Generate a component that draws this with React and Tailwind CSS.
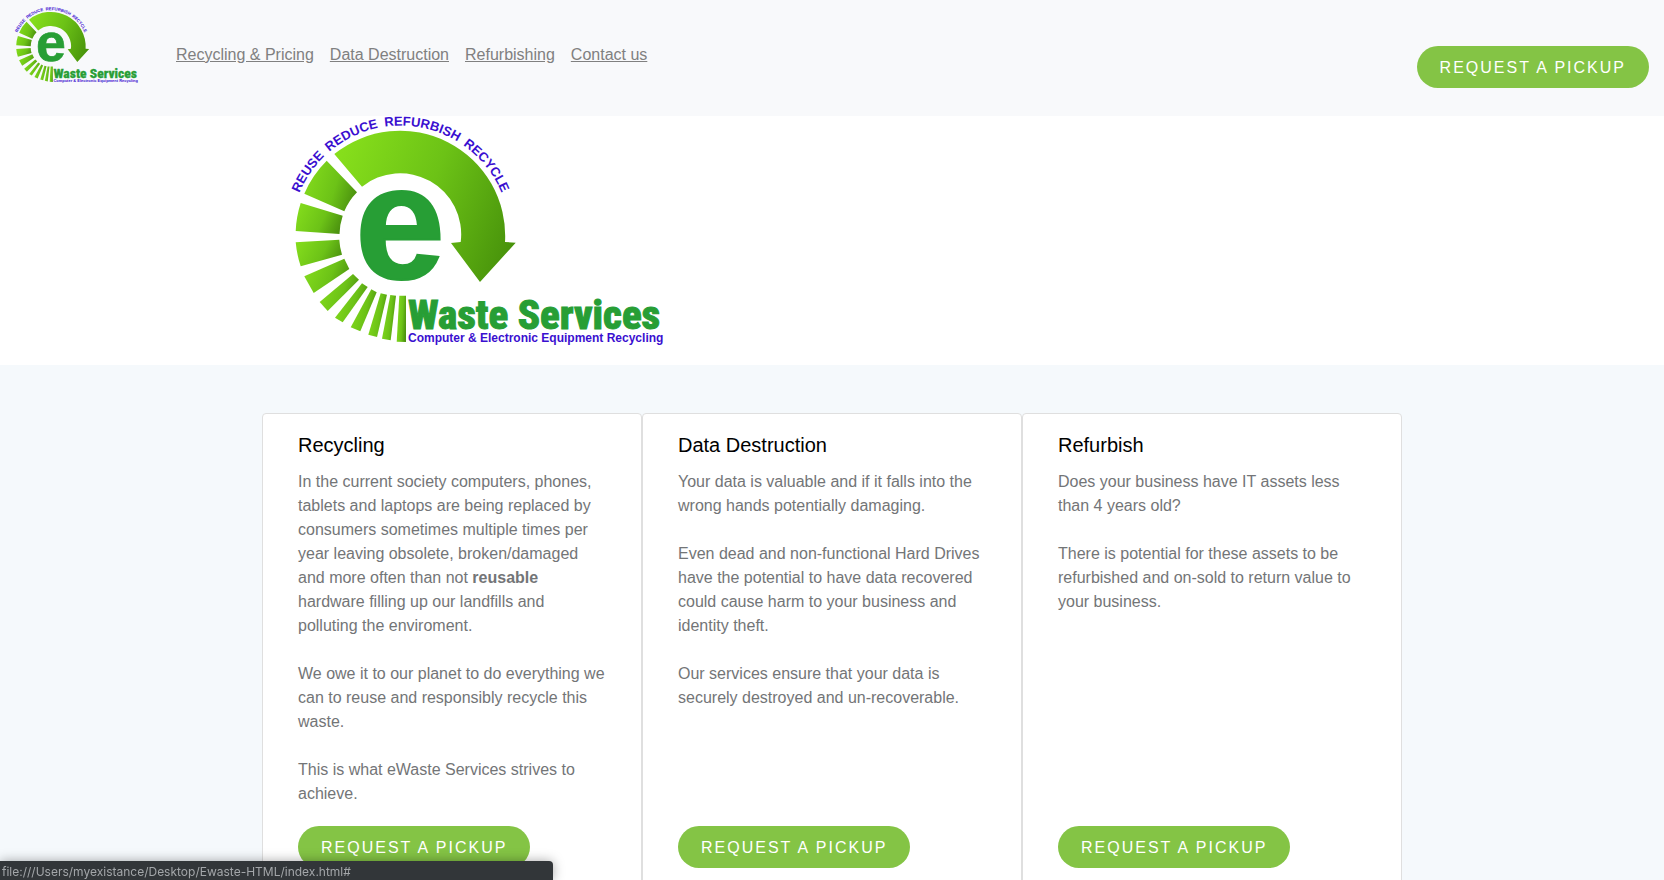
import { useId } from "react";

const SEGMENTS = [
  "M326.7 160.7 A105 105 0 0 0 304.3 193.7 L344.3 211.3 A61 61 0 0 1 357 192.3 Z",
  "M300.7 203 A105 105 0 0 0 295.7 231 L339.5 234 A61 61 0 0 1 342.7 215.7 Z",
  "M295.7 242.3 A105 105 0 0 0 300.7 266.3 L342 254.7 A61 61 0 0 1 339.3 239.7 Z",
  "M304.3 276.3 L313.7 293 L349.3 269 L344.3 258.7 Z",
  "M319.7 302 L327.7 311 L359 279.7 L353 274 Z",
  "M335 317.7 L342.7 322.3 L367.7 287 L362 283.3 Z",
  "M350.7 327.3 L360.3 331.3 L376.7 292.3 L371.3 289.3 Z",
  "M368.3 334.7 L377 337 L387 294.7 L380.7 293.3 Z",
  "M382 338.7 L390.7 340.3 L396 295.7 L390.3 295 Z",
  "M396.7 341.7 L406 342 L406 295.7 L399.3 295.7 Z",
];

function Logo({ className = "" }) {
  const id = useId();
  const sweep = `${id}-sweep`;
  const ray = `${id}-ray`;
  const arc = `${id}-arc`;
  return (
    <svg
      viewBox="292 116 368 229"
      className={`overflow-visible ${className}`}
      role="img"
      aria-label="eWaste Services"
    >
      <defs>
        <linearGradient id={sweep} gradientUnits="userSpaceOnUse" x1="335" y1="170" x2="515" y2="240">
          <stop offset="0" stopColor="#86de1b" />
          <stop offset="0.5" stopColor="#6cc216" />
          <stop offset="1" stopColor="#48930b" />
        </linearGradient>
        <linearGradient id={ray} x1="0" y1="0.3" x2="1" y2="0.6">
          <stop offset="0" stopColor="#83db1c" />
          <stop offset="0.6" stopColor="#6cc217" />
          <stop offset="1" stopColor="#4c930f" />
        </linearGradient>
        <path id={arc} d="M295.5 204 A109.5 109.5 0 0 1 505.5 204" />
      </defs>
      <path
        fill={`url(#${sweep})`}
        d="M334.3 154 A105 105 0 0 1 505 242 L515.7 242.7 L480 282 L451 243 L460.7 242 A61 61 0 0 0 362 186.7 Z"
      />
      {SEGMENTS.map((d) => (
        <path key={d} d={d} fill={`url(#${ray})`} />
      ))}
      <text
        fill="#3a0fd0"
        fontFamily="'Liberation Sans', Arial, sans-serif"
        fontWeight="700"
        fontSize="13"
        textAnchor="middle"
      >
        <textPath href={`#${arc}`} startOffset="50%">
          {"REUSE\u2002REDUCE\u2002REFURBISH\u2002RECYCLE"}
        </textPath>
      </text>
      <text
        x="355"
        y="278"
        fill="#279e35"
        stroke="#279e35"
        strokeWidth="2"
        fontFamily="'Liberation Sans', Arial, sans-serif"
        fontWeight="700"
        fontSize="162"
      >
        e
      </text>
      <text
        x="408"
        y="329"
        fill="#279e35"
        stroke="#279e35"
        strokeWidth="1"
        fontFamily="'Roboto Condensed', Roboto, sans-serif"
        fontWeight="800"
        fontSize="41"
      >
        Waste Services
      </text>
      <text
        x="408"
        y="342"
        fill="#3a0fd0"
        fontFamily="'Liberation Sans', Arial, sans-serif"
        fontWeight="700"
        fontSize="12"
      >
        Computer &amp; Electronic Equipment Recycling
      </text>
    </svg>
  );
}

function PickupButton({ className = "" }) {
  return (
    <button
      type="button"
      className={`rounded-full bg-[#84c445] px-[23px] pt-[10px] pb-2 text-base leading-6 tracking-[2px] whitespace-nowrap text-white uppercase ${className}`}
    >
      Request a pickup
    </button>
  );
}

const LINKS = ["Recycling & Pricing", "Data Destruction", "Refurbishing", "Contact us"];

const CARDS = [
  {
    title: "Recycling",
    paragraphs: [
      <>
        In the current society computers, phones, tablets and laptops are being replaced by consumers
        sometimes multiple times per year leaving obsolete, broken/damaged and more often than not{" "}
        <strong>reusable</strong> hardware filling up our landfills and polluting the enviroment.
      </>,
      "We owe it to our planet to do everything we can to reuse and responsibly recycle this waste.",
      "This is what eWaste Services strives to achieve.",
    ],
  },
  {
    title: "Data Destruction",
    paragraphs: [
      "Your data is valuable and if it falls into the wrong hands potentially damaging.",
      "Even dead and non-functional Hard Drives have the potential to have data recovered could cause harm to your business and identity theft.",
      "Our services ensure that your data is securely destroyed and un-recoverable.",
    ],
  },
  {
    title: "Refurbish",
    paragraphs: [
      "Does your business have IT assets less than 4 years old?",
      "There is potential for these assets to be refurbished and on-sold to return value to your business.",
    ],
  },
];

export default function App() {
  return (
    <div className="h-screen overflow-hidden bg-[#f5f9fc] font-['Liberation_Sans',Arial,sans-serif]">
      <header className="flex items-start bg-[#f8f9fb] px-[15px] pb-7">
        <a href="#" className="mt-[7px] shrink-0">
          <Logo className="h-[76px] w-[122px]" />
        </a>
        <nav className="mt-[43px] ml-[39px] flex gap-4 text-base leading-6 text-[#808080]">
          {LINKS.map((label) => (
            <a key={label} href="#" className="whitespace-nowrap underline">
              {label}
            </a>
          ))}
        </nav>
        <PickupButton className="mt-[46px] ml-auto" />
      </header>

      <section className="bg-white">
        <div className="mx-auto max-w-[1140px] px-[30px] pb-5">
          <Logo className="h-[229px] w-[368px]" />
        </div>
      </section>

      <main className="py-12">
        <div className="mx-auto grid max-w-[1140px] grid-cols-3">
          {CARDS.map((card) => (
            <article
              key={card.title}
              className="flex flex-col items-start rounded border border-[#dfdfdf] bg-white px-[35px] pt-[19px] pb-5"
            >
              <h2 className="text-xl leading-6 text-black">{card.title}</h2>
              <div className="mt-[13px] mb-5 flex flex-col gap-6 text-base leading-6 text-[#737577]">
                {card.paragraphs.map((text, i) => (
                  <p key={i}>{text}</p>
                ))}
              </div>
              <PickupButton className="mt-auto" />
            </article>
          ))}
        </div>
      </main>

      <div className="fixed bottom-0 left-0 w-[553px] max-w-full rounded-tr bg-[#323639] px-0.5 pt-0.5 font-[Inter,sans-serif] text-xs leading-[17px] text-[#a3a6a9] shadow-[0_0_12px_rgba(0,0,0,0.35)]">
        file:///Users/myexistance/Desktop/Ewaste-HTML/index.html#
      </div>
    </div>
  );
}
